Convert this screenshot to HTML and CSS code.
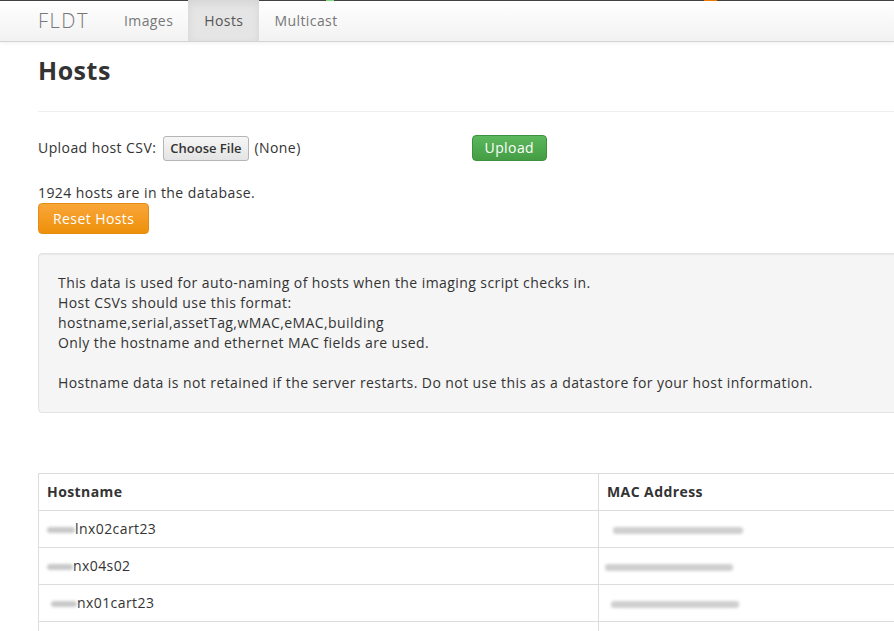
FILE: index.html
```html
<!DOCTYPE html>
<html>
<head>
<meta charset="utf-8">
<link rel="stylesheet" href="styles.css">
</head>
<body>
<div class="topstrip"></div>
<nav class="navbar">
  <span class="brand">FLDT</span>
  <a class="nav-item">Images</a>
  <a class="nav-item active">Hosts</a>
  <a class="nav-item">Multicast</a>
</nav>
<main class="container">
  <div class="page-header"><h1>Hosts</h1></div>
  <div class="upload-row">
    <span class="label">Upload host CSV:</span>
    <span class="file-btn">Choose File</span>
    <span class="file-name">(None)</span>
    <span class="btn btn-success">Upload</span>
  </div>
  <p class="count">1924 hosts are in the database.</p>
  <span class="btn btn-warning">Reset Hosts</span>
  <div class="well">
    This data is used for auto-naming of hosts when the imaging script checks in.<br>
    Host CSVs should use this format:<br>
    hostname,serial,assetTag,wMAC,eMAC,building<br>
    Only the hostname and ethernet MAC fields are used.<br>
    <br>
    Hostname data is not retained if the server restarts. Do not use this as a datastore for your host information.
  </div>
  <table class="table">
    <thead>
      <tr><th class="col-host">Hostname</th><th>MAC Address</th></tr>
    </thead>
    <tbody>
      <tr><td><span class="blur b1"></span>lnx02cart23</td><td><span class="blur mac m1"></span></td></tr>
      <tr><td><span class="blur b2"></span>nx04s02</td><td><span class="blur mac m2"></span></td></tr>
      <tr><td><span class="blur b3"></span>nx01cart23</td><td><span class="blur mac m3"></span></td></tr>
      <tr><td>&nbsp;</td><td>&nbsp;</td></tr>
    </tbody>
  </table>
</main>
</body>
</html>
```
FILE: styles.css
```css
html, body {
  margin: 0;
  padding: 0;
  overflow: hidden;
}
body {
  font-family: "Open Sans", "DejaVu Sans", sans-serif;
  font-size: 14px;
  line-height: 20px;
  letter-spacing: 0.42px;
  color: #333;
  background: #fff;
  width: 894px;
  height: 631px;
}
.topstrip {
  height: 1px;
  background: linear-gradient(to right, #444 0, #444 326px, #7fe07f 326px, #7fe07f 334px, #444 334px, #444 704px, #f57900 704px, #f57900 717px, #444 717px);
}
.navbar {
  display: flex;
  align-items: stretch;
  height: 40px;
  background: linear-gradient(to bottom, #fff 0, #f2f2f2 100%);
  border-bottom: 1px solid #d4d4d4;
  box-shadow: 0 1px 4px rgba(0,0,0,0.065);
  padding-left: 38px;
}
.brand {
  font-size: 20px;
  font-weight: 300;
  color: #777;
  line-height: 40px;
  letter-spacing: 1.5px;
  margin-right: 20px;
}
.nav-item {
  display: block;
  padding: 0 15px;
  line-height: 40px;
  color: #777;
  font-size: 14px;
}
.nav-item.active {
  background: #e5e5e5;
  color: #555;
  box-shadow: inset 0 3px 8px rgba(0,0,0,0.08);
  margin-top: -1px;
  line-height: 42px;
  padding: 0 16px;
}
.container {
  padding-left: 38px;
  width: 1000px;
}
.page-header {
  border-bottom: 1px solid #eee;
  padding-bottom: 21px;
  margin: 0 0 23px 0;
  padding-top: 9px;
}
h1 {
  margin: 0;
  font-size: 25px;
  font-weight: 700;
  line-height: 39px;
  color: #333;
  letter-spacing: 0.5px;
}
.upload-row {
  display: flex;
  align-items: center;
  height: 26px;
}
.label { margin-right: 7px; }
.file-btn {
  display: inline-block;
  font-size: 13px;
  font-weight: 600;
  line-height: 23px;
  padding: 0 6px;
  border: 1px solid #b5b5b5;
  border-radius: 3px;
  background: linear-gradient(to bottom, #f6f6f6, #e4e4e4);
  color: #333;
  letter-spacing: 0;
}
.file-name { margin-left: 6px; width: 217px; }
.btn {
  display: inline-block;
  color: #fff;
  border-radius: 4px;
  font-size: 14px;
  padding: 0 12px;
}
.btn-success {
  background: linear-gradient(to bottom, #5cb85c, #449d44);
  border: 1px solid #3e8f3e;
  line-height: 24px;
}
.count {
  margin: 22px 0 0 0;
  line-height: 20px;
}
.btn-warning {
  background: linear-gradient(to bottom, #f9a63a, #ee900a);
  border: 1px solid #e38d13;
  line-height: 29px;
  padding: 0 14px;
}
.well {
  margin-top: 19px;
  background: #f5f5f5;
  border: 1px solid #e3e3e3;
  border-radius: 4px;
  padding: 19px 19px 19px 19px;
  box-shadow: inset 0 1px 1px rgba(0,0,0,0.05);
  white-space: nowrap;
}
.table {
  margin-top: 60px;
  border-collapse: collapse;
  width: 900px;
  border: 1px solid #ddd;
}
.table th, .table td {
  border: 1px solid #ddd;
  text-align: left;
  padding: 8px;
  line-height: 20px;
  height: 20px;
}
.table th {
  font-weight: 700;
  padding-top: 8px;
  padding-bottom: 8px;
}
.col-host { width: 543px; }
.blur {
  display: inline-block;
  height: 6px;
  border-radius: 3px;
  background: #c8c8c8;
  filter: blur(1.5px);
  vertical-align: middle;
}
.b1 { width: 28px; }
.b2 { width: 26px; }
.b3 { width: 26px; margin-left: 4px; }
.mac { background: #cfcfcf; height: 7px; }
.m1 { width: 130px; margin-left: 6px; }
.m2 { width: 128px; margin-left: -2px; }
.m3 { width: 128px; margin-left: 4px; }
```
